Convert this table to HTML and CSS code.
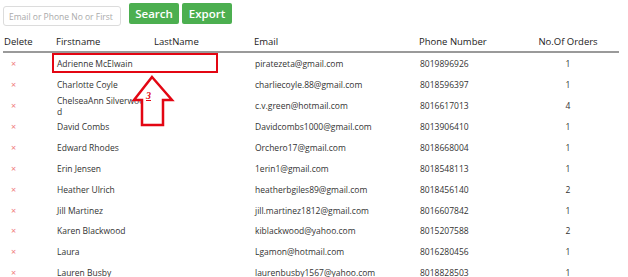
FILE: index.html
```html
<!DOCTYPE html>
<html>
<head>
<meta charset="utf-8">
<link rel="stylesheet" href="styles.css">
</head>
<body>
<div class="page">
  <div class="toolbar">
    <input class="search-input" type="text" placeholder="Email or Phone No or First">
    <button class="btn">Search</button>
    <button class="btn">Export</button>
  </div>
  <table class="grid">
    <colgroup>
      <col class="c-del"><col class="c-first"><col class="c-last"><col class="c-email"><col class="c-phone"><col class="c-orders">
    </colgroup>
    <thead>
      <tr><th>Delete</th><th>Firstname</th><th>LastName</th><th>Email</th><th>Phone Number</th><th class="num">No.Of Orders</th></tr>
    </thead>
    <tbody>
      <tr><td class="del">×</td><td class="first">Adrienne McElwain</td><td></td><td>piratezeta@gmail.com</td><td>8019896926</td><td class="num">1</td></tr>
      <tr><td class="del">×</td><td class="first">Charlotte Coyle</td><td></td><td>charliecoyle.88@gmail.com</td><td>8018596397</td><td class="num">1</td></tr>
      <tr><td class="del">×</td><td class="first">ChelseaAnn Silverwood</td><td></td><td>c.v.green@hotmail.com</td><td>8016617013</td><td class="num">4</td></tr>
      <tr><td class="del">×</td><td class="first">David Combs</td><td></td><td>Davidcombs1000@gmail.com</td><td>8013906410</td><td class="num">1</td></tr>
      <tr><td class="del">×</td><td class="first">Edward Rhodes</td><td></td><td>Orchero17@gmail.com</td><td>8018668004</td><td class="num">1</td></tr>
      <tr><td class="del">×</td><td class="first">Erin Jensen</td><td></td><td>1erin1@gmail.com</td><td>8018548113</td><td class="num">1</td></tr>
      <tr><td class="del">×</td><td class="first">Heather Ulrich</td><td></td><td>heatherbgiles89@gmail.com</td><td>8018456140</td><td class="num">2</td></tr>
      <tr><td class="del">×</td><td class="first">Jill Martinez</td><td></td><td>jill.martinez1812@gmail.com</td><td>8016607842</td><td class="num">1</td></tr>
      <tr><td class="del">×</td><td class="first">Karen Blackwood</td><td></td><td>kiblackwood@yahoo.com</td><td>8015207588</td><td class="num">2</td></tr>
      <tr><td class="del">×</td><td class="first">Laura</td><td></td><td>Lgamon@hotmail.com</td><td>8016280456</td><td class="num">1</td></tr>
      <tr><td class="del">×</td><td class="first">Lauren Busby</td><td></td><td>laurenbusby1567@yahoo.com</td><td>8018828503</td><td class="num">1</td></tr>
    </tbody>
  </table>
  <div class="highlight-box"></div>
  <svg class="arrow" width="50" height="60" viewBox="0 0 50 60">
    <polygon points="22,3 42,26 33,26 33,51 12,51 12,26 4,26" fill="#fff" stroke="#e30613" stroke-width="2.5" stroke-linejoin="miter"/>
  </svg>
  <span class="step">3</span>
</div>
</body>
</html>
```
FILE: styles.css
```css
html, body {
  margin: 0;
  padding: 0;
  background: #fff;
}
.page {
  position: relative;
  padding: 3px 0 0 3px;
  width: 616px;
  height: 274px;
  overflow: hidden;
  font-family: "Open Sans", "Noto Sans", sans-serif;
  color: #333;
}
.toolbar {
  display: flex;
  align-items: flex-start;
  gap: 3px;
  height: 26px;
}
.search-input {
  box-sizing: border-box;
  width: 118px;
  height: 20px;
  margin: 3px 5px 0 0;
  padding: 0 5px;
  border: 1px solid #dcdcdc;
  border-radius: 3px;
  font-family: inherit;
  font-size: 8.5px;
  color: #333;
}
.search-input::placeholder {
  color: #aaa;
}
.btn {
  box-sizing: border-box;
  width: 50px;
  height: 21px;
  padding: 0;
  border: none;
  border-radius: 2px;
  background: #4caf50;
  color: #fff;
  font-family: inherit;
  font-size: 11.5px;
  font-weight: 600;
}
.grid {
  border-collapse: collapse;
  table-layout: fixed;
  width: 616px;
  margin-top: 2px;
}
.c-del { width: 52px; }
.c-first { width: 98px; }
.c-last { width: 100px; }
.c-email { width: 165px; }
.c-phone { width: 99px; }
.c-orders { width: 102px; }
.grid th {
  height: 20px;
  padding: 0 0 0 1px;
  text-align: left;
  font-weight: 400;
  font-size: 9.5px;
  color: #222;
  border-bottom: 2px solid #9a9a9a;
  vertical-align: middle;
}
.grid td {
  height: 20.8px;
  padding: 0 0 0 2px;
  font-size: 8.5px;
  line-height: 11px;
  vertical-align: middle;
  color: #333;
}
.grid .num {
  text-align: center;
  padding: 0;
}
.grid td.del {
  padding-left: 8px;
  color: #f07a7a;
  font-size: 9px;
}
.grid td.first {
  padding-right: 5px;
  word-break: break-all;
}
.highlight-box {
  position: absolute;
  left: 52px;
  top: 53px;
  width: 162px;
  height: 16px;
  border: 2px solid #e30613;
}
.arrow {
  position: absolute;
  left: 130px;
  top: 74px;
}
.step {
  position: absolute;
  left: 146px;
  top: 90px;
  font-family: "Liberation Serif", serif;
  font-style: italic;
  font-weight: 700;
  font-size: 10px;
  color: #e30613;
  text-decoration: underline;
}
```
